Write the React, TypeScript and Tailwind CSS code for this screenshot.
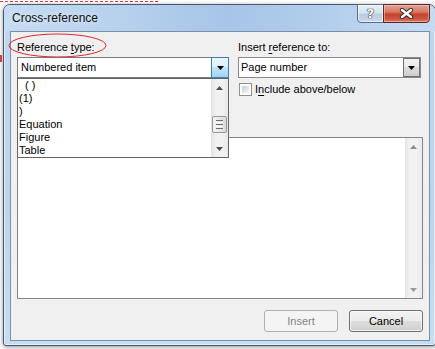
import React from "react";

const Tri = ({ dir, color }: { dir: "up" | "down"; color: string }) => (
  <svg width="7" height="4" viewBox="0 0 7 4" className="block">
    {dir === "up" ? (
      <path d="M3.5 0 L7 4 L0 4 Z" fill={color} />
    ) : (
      <path d="M0 0 L7 0 L3.5 4 Z" fill={color} />
    )}
  </svg>
);

const Grip = () => (
  <div className="flex flex-col gap-[1px] items-center">
    <div className="w-[7px] h-[1px] bg-[#6f6f6f]" />
    <div className="w-[7px] h-[1px] bg-[#ffffff]" />
    <div className="w-[7px] h-[1px] bg-[#6f6f6f]" />
    <div className="w-[7px] h-[1px] bg-[#ffffff]" />
    <div className="w-[7px] h-[1px] bg-[#6f6f6f]" />
  </div>
);

export default function App() {
  const items = [
    { t: "( )", pl: "pl-[7px]" },
    { t: "(1)", pl: "pl-[1px]" },
    { t: ")", pl: "pl-[1px]" },
    { t: "Equation", pl: "pl-[1px]" },
    { t: "Figure", pl: "pl-[1px]" },
    { t: "Table", pl: "pl-[1px]" },
  ];

  return (
    <div className="relative w-[435px] h-[349px] overflow-hidden bg-white font-['Liberation_Sans',Arial,sans-serif] text-[11px] text-black">
      {/* document behind the dialog */}
      <div className="absolute left-0 top-[1px] w-[158px] border-t border-dashed border-[#e23a3a]" />
      <div className="absolute left-0 top-[55px] w-[2px] h-[7px] bg-[#d04040]" />

      {/* window */}
      <div className="pl-[3px] pt-[4px]">
        <div className="w-[433px] h-[342px] flex flex-col rounded-t-[7px] rounded-b-[3px] border border-[#46586c] bg-[linear-gradient(180deg,#c0d7f0_0%,#bcd5ef_60%,#c7ddf3_100%)] shadow-[inset_0_0_0_1px_rgba(255,255,255,0.55),0_1px_4px_rgba(0,0,0,0.45)]">
          {/* title bar */}
          <div className="h-[26px] flex justify-between rounded-t-[6px] bg-[linear-gradient(90deg,#c6dcf3_0%,#b5cfec_30%,#a7c5e8_52%,#b3ceec_75%,#c5dbf2_100%)]">
            <div className="self-center pl-[8px] pb-[1px] text-[12px] leading-[14px] text-[#111] [text-shadow:0_0_6px_rgba(255,255,255,0.9)]">
              Cross-reference
            </div>
            <div className="flex self-start -mt-px mr-[5px] h-[19px]">
              <div className="w-[27px] h-[19px] flex items-center justify-center rounded-bl-[4px] border border-[#5a6c82] bg-[linear-gradient(180deg,#e9f0f7_0%,#d6e2ef_45%,#bccde1_55%,#c9d8e9_100%)] shadow-[inset_0_0_0_1px_rgba(255,255,255,0.6)]">
                <span className="text-[13px] leading-[13px] font-bold text-white font-['DejaVu_Sans',sans-serif] [text-shadow:0_0_1px_#2d2d2d,0_0_1px_#2d2d2d,0_0_1px_#2d2d2d]">
                  ?
                </span>
              </div>
              <div className="w-[47px] h-[19px] -ml-px flex items-center justify-center rounded-br-[4px] border border-[#5b2a25] bg-[linear-gradient(180deg,#e3a295_0%,#d77a66_40%,#c5432c_55%,#cc5640_80%,#dc7a62_100%)] shadow-[inset_0_0_0_1px_rgba(255,220,210,0.45)]">
                <svg width="15" height="11" viewBox="0 0 15 11" className="block">
                  <path d="M3 2 L12 9 M12 2 L3 9" stroke="#3a2420" strokeWidth="4.2" strokeLinecap="round" />
                  <path d="M3 2 L12 9 M12 2 L3 9" stroke="#ffffff" strokeWidth="2.4" strokeLinecap="round" />
                </svg>
              </div>
            </div>
          </div>

          {/* client area */}
          <div className="ml-[6px] mr-[5px] h-[310px] border border-[#7b8ea3] bg-[#f0f0f0]">
            <div className="flex flex-col px-[6px] pt-[9px] h-full">
              <div className="flex gap-[9px] h-[55px]">
                {/* left column */}
                <div className="relative w-[212px]">
                  <div className="h-[13px] leading-[13px] mb-[3px]">
                    Reference <span className="underline underline-offset-[2px]">t</span>ype:
                  </div>
                  <div className="h-[21px] flex items-center border border-[#7c7c7c] bg-white">
                    <span className="flex-1 pl-[3px] leading-[13px]">Numbered item</span>
                    <div className="w-[18px] h-[21px] -mr-px flex items-center justify-center border border-[#3c7fb1] bg-[linear-gradient(180deg,#eaf6fd_0%,#d9f0fc_45%,#bee6fd_50%,#a2d4f2_100%)]">
                      <Tri dir="down" color="#000" />
                    </div>
                  </div>

                  {/* opened drop-down list */}
                  <div className="absolute left-0 top-[37px] z-10 w-[212px] h-[80px] flex border border-[#646464] bg-white">
                    <div className="flex-1 flex flex-col">
                      {items.map((it, i) => (
                        <div key={i} className={`h-[13px] leading-[13px] whitespace-pre ${it.pl}`}>
                          {it.t}
                        </div>
                      ))}
                    </div>
                    <div className="w-[17px] flex flex-col bg-[linear-gradient(90deg,#e3e3e3_0%,#f1f1f1_30%,#f1f1f1_70%,#e8e8e8_100%)]">
                      <div className="h-[17px] flex items-center justify-center">
                        <Tri dir="up" color="#4d4d4d" />
                      </div>
                      <div className="flex-1 flex flex-col pt-[20px]">
                        <div className="mx-[1px] h-[17px] flex items-center justify-center rounded-[2px] border border-[#979797] bg-[linear-gradient(90deg,#f3f3f3_0%,#e9e9e9_50%,#d9d9d9_100%)]">
                          <Grip />
                        </div>
                      </div>
                      <div className="h-[17px] flex items-center justify-center">
                        <Tri dir="down" color="#4d4d4d" />
                      </div>
                    </div>
                  </div>
                </div>

                {/* right column */}
                <div className="w-[183px]">
                  <div className="h-[13px] leading-[13px] mb-[3px]">
                    Insert <span className="underline underline-offset-[2px]">r</span>eference to:
                  </div>
                  <div className="h-[21px] flex items-center border border-[#8a8a8a] bg-white">
                    <span className="flex-1 pl-[2px] leading-[13px]">Page number</span>
                    <div className="w-[17px] h-[19px] flex items-center justify-center border border-[#707070] bg-[linear-gradient(180deg,#f2f2f2_0%,#ebebeb_50%,#dddddd_50%,#cfcfcf_100%)]">
                      <Tri dir="down" color="#000" />
                    </div>
                  </div>
                  <div className="mt-[5px] h-[13px] flex items-center gap-[3px] pl-[1px]">
                    <div className="w-[13px] h-[13px] border border-[#8e8f8f] bg-white p-[2px]">
                      <div className="w-full h-full bg-[linear-gradient(135deg,#c9cdd2_0%,#e4e6e9_60%,#f4f4f4_100%)]" />
                    </div>
                    <span className="leading-[13px]">
                      I<span className="underline underline-offset-[2px]">n</span>clude above/below
                    </span>
                  </div>
                </div>
              </div>

              {/* big list box */}
              <div className="mt-[41px] h-[162px] flex border border-[#828790] bg-white">
                <div className="flex-1" />
                <div className="w-[17px] flex flex-col bg-[linear-gradient(90deg,#e6e6e6_0%,#f2f2f2_30%,#f2f2f2_70%,#eaeaea_100%)]">
                  <div className="h-[17px] flex items-center justify-center">
                    <Tri dir="up" color="#8c8c8c" />
                  </div>
                  <div className="flex-1" />
                  <div className="h-[17px] flex items-center justify-center">
                    <Tri dir="down" color="#9a9a9a" />
                  </div>
                </div>
              </div>

              {/* buttons */}
              <div className="mt-[11px] flex justify-end gap-[11px]">
                <div className="w-[74px] h-[22px] flex items-center justify-center rounded-[3px] border border-[#adb2b5] bg-[#f4f4f4] text-[#838383]">
                  Insert
                </div>
                <div className="w-[74px] h-[22px] flex items-center justify-center rounded-[3px] border border-[#707070] bg-[linear-gradient(180deg,#f2f2f2_0%,#ebebeb_50%,#dddddd_50%,#cfcfcf_100%)] shadow-[inset_0_0_0_1px_rgba(255,255,255,0.7)]">
                  Cancel
                </div>
              </div>
            </div>
          </div>
        </div>
      </div>

      {/* red annotation ellipse */}
      <svg className="absolute left-[8px] top-[33px]" width="99" height="25" viewBox="0 0 99 25">
        <ellipse cx="49.5" cy="12.5" rx="48.5" ry="11.5" fill="none" stroke="#e0262c" strokeWidth="1" />
      </svg>
    </div>
  );
}
